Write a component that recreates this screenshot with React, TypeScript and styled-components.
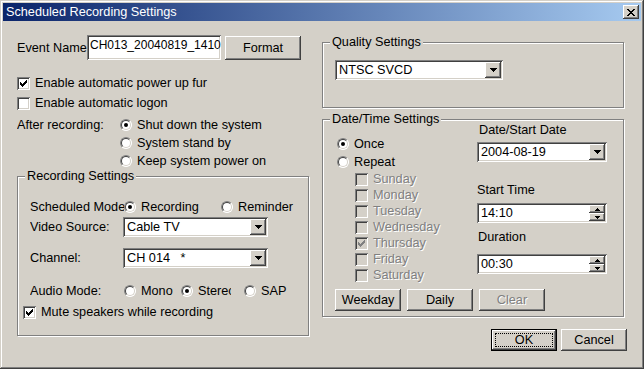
import React from "react";
import styled, { createGlobalStyle, css } from "styled-components";

const FACE = "#d4d0c8";

const GlobalStyle = createGlobalStyle`
  html, body {
    margin: 0;
    padding: 0;
    background: ${FACE};
  }
  body {
    font-family: "Liberation Sans", Arial, sans-serif;
    font-size: 12.7px;
    color: #000;
  }
`;

const raised = css`
  background: ${FACE};
  box-shadow: inset -1px -1px #404040, inset 1px 1px #ffffff,
    inset -2px -2px #808080, inset 2px 2px ${FACE};
`;

const sunken = css`
  background: #fff;
  box-shadow: inset 1px 1px #808080, inset -1px -1px #ffffff,
    inset 2px 2px #404040, inset -2px -2px ${FACE};
`;

const disabledText = css`
  color: #808080;
  text-shadow: 1px 1px 0 #fff;
`;

// WINDOW FRAME
const Window = styled.div`
  width: 644px;
  height: 369px;
  box-sizing: border-box;
  padding: 3px;
  background: ${FACE};
  box-shadow: inset -1px -1px #404040, inset 1px 1px ${FACE},
    inset -2px -2px #808080, inset 2px 2px #ffffff;
  display: flex;
  flex-direction: column;
`;

const TitleBar = styled.div`
  height: 18px;
  flex: none;
  display: flex;
  align-items: center;
  justify-content: space-between;
  padding-left: 3px;
  background: linear-gradient(to right, #0a246a, #a6caf0);
`;

const TitleText = styled.span`
  color: #fff;
  line-height: 14px;
`;

const CloseBox = styled.span`
  ${raised};
  width: 16px;
  height: 14px;
  margin-right: 2px;
  display: flex;
  align-items: center;
  justify-content: center;
`;

const Body = styled.div`
  flex: 1;
  display: grid;
  grid-template-columns: 293px 303px;
  column-gap: 12px;
  align-items: start;
  padding-left: 14px;
`;

const Column = styled.div`
  display: flex;
  flex-direction: column;
`;

// SMALL CONTROLS
const Row = styled.div<{ $h?: number; $mt?: number; $ml?: number; $gap?: number }>`
  display: flex;
  align-items: center;
  height: ${(p) => p.$h ?? 16}px;
  margin-top: ${(p) => p.$mt ?? 0}px;
  margin-left: ${(p) => p.$ml ?? 0}px;
  gap: ${(p) => p.$gap ?? 0}px;
  white-space: nowrap;
`;

const Text = styled.span<{ $disabled?: boolean; $clip?: number; $ml?: number }>`
  line-height: 14px;
  white-space: pre;
  margin-left: ${(p) => p.$ml ?? 0}px;
  ${(p) => p.$disabled && disabledText};
  ${(p) =>
    p.$clip &&
    css`
      width: ${p.$clip}px;
      overflow: hidden;
      flex: none;
    `};
`;

const FieldLabel = styled.span<{ $w: number }>`
  width: ${(p) => p.$w}px;
  flex: none;
  overflow: hidden;
  white-space: nowrap;
  line-height: 14px;
`;

const CheckBox = styled.span<{ $disabled?: boolean }>`
  ${sunken};
  background: ${(p) => (p.$disabled ? FACE : "#fff")};
  width: 13px;
  height: 13px;
  flex: none;
  display: flex;
  align-items: center;
  justify-content: center;
`;

const RadioCircle = styled.span<{ $on?: boolean }>`
  position: relative;
  width: 12px;
  height: 12px;
  flex: none;
  box-sizing: border-box;
  border-radius: 50%;
  border: 1px solid;
  border-color: #808080 #fff #fff #808080;
  background: #fff;
  &::before {
    content: "";
    position: absolute;
    inset: 0;
    border-radius: 50%;
    border: 1px solid;
    border-color: #404040 ${FACE} ${FACE} #404040;
  }
  &::after {
    content: "";
    display: ${(p) => (p.$on ? "block" : "none")};
    position: absolute;
    left: 3px;
    top: 3px;
    width: 4px;
    height: 4px;
    border-radius: 50%;
    background: #000;
  }
`;

const RadioOption = styled.span<{ $w?: number }>`
  display: flex;
  align-items: center;
  gap: 5px;
  flex: none;
  width: ${(p) => (p.$w ? `${p.$w}px` : "auto")};
`;

const PushButton = styled.button<{ $w: number; $h: number; $default?: boolean }>`
  ${raised};
  position: relative;
  width: ${(p) => p.$w}px;
  height: ${(p) => p.$h}px;
  flex: none;
  border: none;
  padding: 0;
  font: inherit;
  color: #000;
  &:disabled {
    ${disabledText};
  }
  ${(p) =>
    p.$default &&
    css`
      border: 1px solid #000;
      &::after {
        content: "";
        position: absolute;
        inset: 3px;
        border: 1px dotted #000;
      }
    `};
`;

const EditBox = styled.div<{ $w: number; $h: number }>`
  ${sunken};
  width: ${(p) => p.$w}px;
  height: ${(p) => p.$h}px;
  box-sizing: border-box;
  padding: 3px 3px 0;
  font-size: 12px;
  line-height: 14px;
  white-space: nowrap;
  overflow: hidden;
  flex: none;
`;

const Field = styled.div<{ $w: number }>`
  ${sunken};
  width: ${(p) => p.$w}px;
  height: 20px;
  box-sizing: border-box;
  padding: 2px;
  display: flex;
  align-items: stretch;
  flex: none;
`;

const FieldText = styled.span`
  flex: 1;
  padding-left: 2px;
  display: flex;
  align-items: center;
  white-space: pre;
  overflow: hidden;
`;

const DropButton = styled.span`
  ${raised};
  width: 16px;
  display: flex;
  align-items: center;
  justify-content: center;
`;

const SpinButtons = styled.span`
  width: 16px;
  display: flex;
  flex-direction: column;
`;

const SpinHalf = styled.span`
  ${raised};
  flex: 1;
  display: flex;
  align-items: center;
  justify-content: center;
`;

// GROUP BOX
const GroupBox = styled.div<{ $h: number; $mt: number }>`
  position: relative;
  box-sizing: border-box;
  height: ${(p) => p.$h}px;
  margin-top: ${(p) => p.$mt}px;
  margin-right: 1px;
  border: 1px solid #808080;
  box-shadow: 1px 1px 0 #fff, inset 1px 1px 0 #fff;
`;

const Legend = styled.span`
  position: absolute;
  top: -8px;
  left: 7px;
  padding: 0 2px;
  line-height: 14px;
  background: ${FACE};
`;

const GroupInner = styled.div<{ $pt: number; $pl: number }>`
  display: flex;
  flex-direction: column;
  padding-top: ${(p) => p.$pt}px;
  padding-left: ${(p) => p.$pl}px;
`;

const DateGrid = styled.div`
  display: grid;
  grid-template-columns: 142px 130px;
  padding-top: 3px;
  padding-left: 12px;
`;

const ButtonRow = styled.div<{ $mt: number }>`
  grid-column: 1 / -1;
  display: flex;
  gap: 6px;
  margin-top: ${(p) => p.$mt}px;
`;

const DialogButtons = styled.div`
  display: flex;
  justify-content: flex-end;
  gap: 4px;
  margin-top: 12px;
  margin-right: -2px;
`;

// ICONS
const CheckMark = ({ gray }: { gray?: boolean }) => (
  <svg width="7" height="7" viewBox="0 0 7 7" shapeRendering="crispEdges">
    <path
      d="M6 0h1v3h-1v1h-1v1h-1v1h-1v1h-1v-1h-1v-1h-1v-3h1v1h1v1h1v-1h1v-1h1z"
      fill={gray ? "#808080" : "#000"}
    />
  </svg>
);

const DownTriangle = () => (
  <svg width="7" height="4" viewBox="0 0 7 4" shapeRendering="crispEdges">
    <path d="M0 0h7v1h-1v1h-1v1h-1v1h-1v-1h-1v-1h-1v-1h-1z" fill="#000" />
  </svg>
);

const SmallArrow = ({ up }: { up?: boolean }) => (
  <svg width="5" height="3" viewBox="0 0 5 3" shapeRendering="crispEdges">
    <path
      d={up ? "M2 0h1v1h1v1h1v1H0V2h1V1h1z" : "M0 0h5v1H4v1H3v1H2V2H1V1H0z"}
      fill="#000"
    />
  </svg>
);

const CloseGlyph = () => (
  <svg width="8" height="7" viewBox="0 0 8 7" shapeRendering="crispEdges">
    <path
      d="M0 0h2v1h1v1h2v-1h1v-1h2v1h-1v1h-1v1h-1v1h1v1h1v1h1v1h-2v-1h-1v-1h-2v1h-1v1h-2v-1h1v-1h1v-1h1v-1h-1v-1h-1v-1h-1z"
      fill="#000"
    />
  </svg>
);

// HELPERS
const Check = ({
  label,
  checked,
  disabled,
  mt,
  ml,
}: {
  label: string;
  checked?: boolean;
  disabled?: boolean;
  mt?: number;
  ml?: number;
}) => (
  <Row $mt={mt} $ml={ml} $gap={5}>
    <CheckBox $disabled={disabled}>{checked && <CheckMark gray={disabled} />}</CheckBox>
    <Text $disabled={disabled}>{label}</Text>
  </Row>
);

const Radio = ({ label, on, w, clip }: { label: string; on?: boolean; w?: number; clip?: number }) => (
  <RadioOption $w={w}>
    <RadioCircle $on={on} />
    <Text $clip={clip}>{label}</Text>
  </RadioOption>
);

const Combo = ({ value, w }: { value: string; w: number }) => (
  <Field $w={w}>
    <FieldText>{value}</FieldText>
    <DropButton>
      <DownTriangle />
    </DropButton>
  </Field>
);

const Spin = ({ value, w }: { value: string; w: number }) => (
  <Field $w={w}>
    <FieldText>{value}</FieldText>
    <SpinButtons>
      <SpinHalf>
        <SmallArrow up />
      </SpinHalf>
      <SpinHalf>
        <SmallArrow />
      </SpinHalf>
    </SpinButtons>
  </Field>
);

const days = [
  { name: "Sunday", on: false },
  { name: "Monday", on: false },
  { name: "Tuesday", on: false },
  { name: "Wednesday", on: false },
  { name: "Thursday", on: true },
  { name: "Friday", on: false },
  { name: "Saturday", on: false },
];

export default function App() {
  return (
    <>
      <GlobalStyle />
      <Window>
        <TitleBar>
          <TitleText>Scheduled Recording Settings</TitleText>
          <CloseBox>
            <CloseGlyph />
          </CloseBox>
        </TitleBar>

        <Body>
          <Column>
            <Row $h={25} $mt={14}>
              <FieldLabel $w={70}>Event Name</FieldLabel>
              <EditBox $w={134} $h={25}>CH013_20040819_1410</EditBox>
              <PushButton $w={76} $h={24} style={{ marginLeft: 4 }}>
                Format
              </PushButton>
            </Row>

            <Check label="Enable automatic power up fur" checked mt={15} />
            <Check label="Enable automatic logon" mt={4} />

            <Row $h={54} $mt={5} style={{ alignItems: "flex-start" }}>
              <FieldLabel $w={103} style={{ lineHeight: "18px" }}>
                After recording:
              </FieldLabel>
              <Column>
                <Row $h={18}>
                  <Radio label="Shut down the system" on />
                </Row>
                <Row $h={18}>
                  <Radio label="System stand by" />
                </Row>
                <Row $h={18}>
                  <Radio label="Keep system power on" />
                </Row>
              </Column>
            </Row>

            <GroupBox $h={160} $mt={6}>
              <Legend>Recording Settings</Legend>
              <GroupInner $pt={21} $pl={5}>
                <Row $h={18} $ml={7}>
                  <FieldLabel $w={94}>Scheduled Mode</FieldLabel>
                  <Radio label="Recording" on w={97} />
                  <Radio label="Reminder" />
                </Row>
                <Row $h={20} $mt={1} $ml={7}>
                  <FieldLabel $w={93}>Video Source:</FieldLabel>
                  <Combo value="Cable TV" w={145} />
                </Row>
                <Row $h={20} $mt={11} $ml={7}>
                  <FieldLabel $w={93}>Channel:</FieldLabel>
                  <Combo value="CH 014   *" w={145} />
                </Row>
                <Row $h={18} $mt={14} $ml={7}>
                  <FieldLabel $w={94}>Audio Mode:</FieldLabel>
                  <Radio label="Mono" w={57} />
                  <Radio label="Stereo" on w={63} clip={33} />
                  <Radio label="SAP" />
                </Row>
                <Check label="Mute speakers while recording" checked mt={4} />
              </GroupInner>
            </GroupBox>
          </Column>

          <Column>
            <GroupBox $h={66} $mt={21}>
              <Legend>Quality Settings</Legend>
              <GroupInner $pt={17} $pl={12}>
                <Combo value="NTSC SVCD" w={168} />
              </GroupInner>
            </GroupBox>

            <GroupBox $h={198} $mt={11}>
              <Legend>Date/Time Settings</Legend>
              <DateGrid>
                <Column style={{ paddingTop: 12 }}>
                  <Row $h={18} $ml={2}>
                    <Radio label="Once" on />
                  </Row>
                  <Row $h={18} $ml={2}>
                    <Radio label="Repeat" />
                  </Row>
                  {days.map((d) => (
                    <Check key={d.name} label={d.name} checked={d.on} disabled ml={20} />
                  ))}
                </Column>
                <Column>
                  <Text $ml={2}>Date/Start Date</Text>
                  <Row $h={20} $mt={5}>
                    <Combo value="2004-08-19" w={130} />
                  </Row>
                  <Text style={{ marginTop: 21 }}>Start Time</Text>
                  <Row $h={20} $mt={6}>
                    <Spin value="14:10" w={130} />
                  </Row>
                  <Text $ml={1} style={{ marginTop: 7 }}>
                    Duration
                  </Text>
                  <Row $h={20} $mt={10}>
                    <Spin value="00:30" w={130} />
                  </Row>
                </Column>
                <ButtonRow $mt={6}>
                  <PushButton $w={66} $h={22}>
                    Weekday
                  </PushButton>
                  <PushButton $w={66} $h={22}>
                    Daily
                  </PushButton>
                  <PushButton $w={66} $h={22} disabled>
                    Clear
                  </PushButton>
                </ButtonRow>
              </DateGrid>
            </GroupBox>

            <DialogButtons>
              <PushButton $w={66} $h={22} $default>
                OK
              </PushButton>
              <PushButton $w={66} $h={22}>
                Cancel
              </PushButton>
            </DialogButtons>
          </Column>
        </Body>
      </Window>
    </>
  );
}
